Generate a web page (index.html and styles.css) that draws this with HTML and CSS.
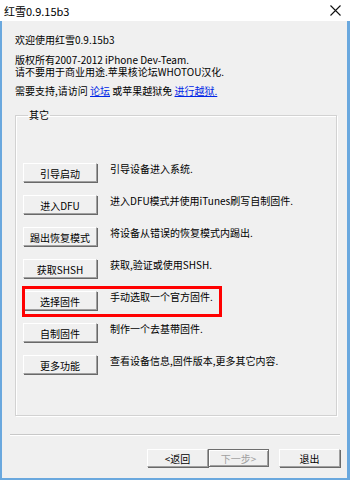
FILE: index.html
```html
<!DOCTYPE html>
<html lang="zh-CN">
<head>
<meta charset="utf-8">
<title>红雪0.9.15b3</title>
<link rel="stylesheet" href="styles.css">
</head>
<body>
<div class="window">
  <div class="titlebar">
    <span class="title">红雪0.9.15b3</span>
    <span class="close">
      <svg width="11" height="11" viewBox="0 0 11 11"><path d="M0.5 0.5 L10.5 10.5 M10.5 0.5 L0.5 10.5" stroke="#111" stroke-width="1.1" fill="none"/></svg>
    </span>
  </div>
  <div class="client">
    <p class="line first">欢迎使用红雪0.9.15b3</p>
    <p class="line block">版权所有2007-2012 iPhone Dev-Team.</p>
    <p class="line">请不要用于商业用途.苹果核论坛WHOTOU汉化.</p>
    <p class="line block2">需要支持,请访问 <a class="link">论坛</a> 或苹果越狱免 <a class="link">进行越狱.</a></p>
    <fieldset class="group">
      <legend>其它</legend>
      <div class="rows">
        <div class="row"><button class="btn">引导启动</button><span class="desc">引导设备进入系统.</span></div>
        <div class="row"><button class="btn">进入DFU</button><span class="desc">进入DFU模式并使用iTunes刷写自制固件.</span></div>
        <div class="row"><button class="btn">踢出恢复模式</button><span class="desc">将设备从错误的恢复模式内踢出.</span></div>
        <div class="row"><button class="btn">获取SHSH</button><span class="desc">获取,验证或使用SHSH.</span></div>
        <div class="row marked"><button class="btn">选择固件</button><span class="desc">手动选取一个官方固件.</span><span class="highlight"></span></div>
        <div class="row"><button class="btn">自制固件</button><span class="desc">制作一个去基带固件.</span></div>
        <div class="row"><button class="btn">更多功能</button><span class="desc">查看设备信息,固件版本,更多其它内容.</span></div>
      </div>
    </fieldset>
    <div class="separator"></div>
    <div class="footer">
      <button class="btn wide">&lt;返回</button>
      <button class="btn wide default" disabled>下一步&gt;</button>
      <button class="btn wide exit">退出</button>
    </div>
  </div>
</div>
</body>
</html>
```
FILE: styles.css
```css
* { box-sizing: border-box; }
html, body { margin: 0; padding: 0; }
body {
  width: 350px;
  height: 480px;
  background: #f0f0f0;
  font-family: "Noto Sans CJK SC", "Noto Sans", sans-serif;
  font-size: 10px;
  color: #000;
  overflow: hidden;
}
.window {
  width: 350px;
  height: 480px;
  display: flex;
  flex-direction: column;
}
.titlebar {
  height: 21px;
  flex: none;
  background: #fff;
  display: flex;
  align-items: center;
  justify-content: space-between;
  padding: 0 4px 0 4px;
  border-right: 5px solid #fff;
}
.title { font-size: 11px; line-height: 12px; }
.close { display: flex; width: 11px; height: 11px; }
.client {
  flex: 1;
  background: #f0f0f0;
  border-left: 2px solid #6aa8de;
  border-right: 3px solid #6aa8de;
  border-bottom: 2px solid #6aa8de;
  padding: 13px 0 0 13px;
  display: flex;
  flex-direction: column;
}
.line { margin: 0; height: 12px; line-height: 12px; white-space: nowrap; }
.block { margin-top: 8px; }
.block2 { margin-top: 7px; }
.link { color: #0026e6; text-decoration: underline; }
.group {
  margin: 12px 0 0 0;
  padding: 0 0 0 7px;
  width: 322px;
  height: 307px;
  border: 1px solid #d2d2d2;
  box-shadow: 1px 1px 0 #fff, inset 1px 1px 0 #fff;
  min-width: 0;
}
.group legend {
  padding: 0 1px;
  margin-left: 5px;
  line-height: 12px;
}
.rows {
  display: flex;
  flex-direction: column;
  gap: 13px;
  padding-top: 42px;
}
.row {
  display: flex;
  align-items: flex-start;
  gap: 13px;
  position: relative;
}
.btn {
  font-family: inherit;
  font-size: 10px;
  color: #000;
  width: 74px;
  height: 19px;
  padding: 2px 0 0 0;
  background: #f0f0f0;
  border: 1px solid;
  border-color: #fff #a0a0a0 #a0a0a0 #fff;
  box-shadow: 1px 1px 0 #696969;
  line-height: 12px;
  flex: none;
}
.desc { line-height: 12px; white-space: nowrap; }
.highlight {
  position: absolute;
  left: -1px;
  top: -5px;
  width: 200px;
  height: 31px;
  border: 3px solid #f00;
}
.separator {
  margin: 18px 0 0 -5px;
  width: 330px;
  height: 2px;
  border-top: 1px solid #c8c8c8;
  border-bottom: 1px solid #fff;
}
.footer {
  display: flex;
  margin: 13px 0 0 132px;
}
.btn.wide { width: 61px; height: 18px; }
.btn.default {
  color: #a0a0a0;
  border: 1px solid #6e6e6e;
  box-shadow: inset 1px 1px 0 #fff, inset -1px -1px 0 #a0a0a0;
}
.btn.exit { margin-left: 10px; }
```
